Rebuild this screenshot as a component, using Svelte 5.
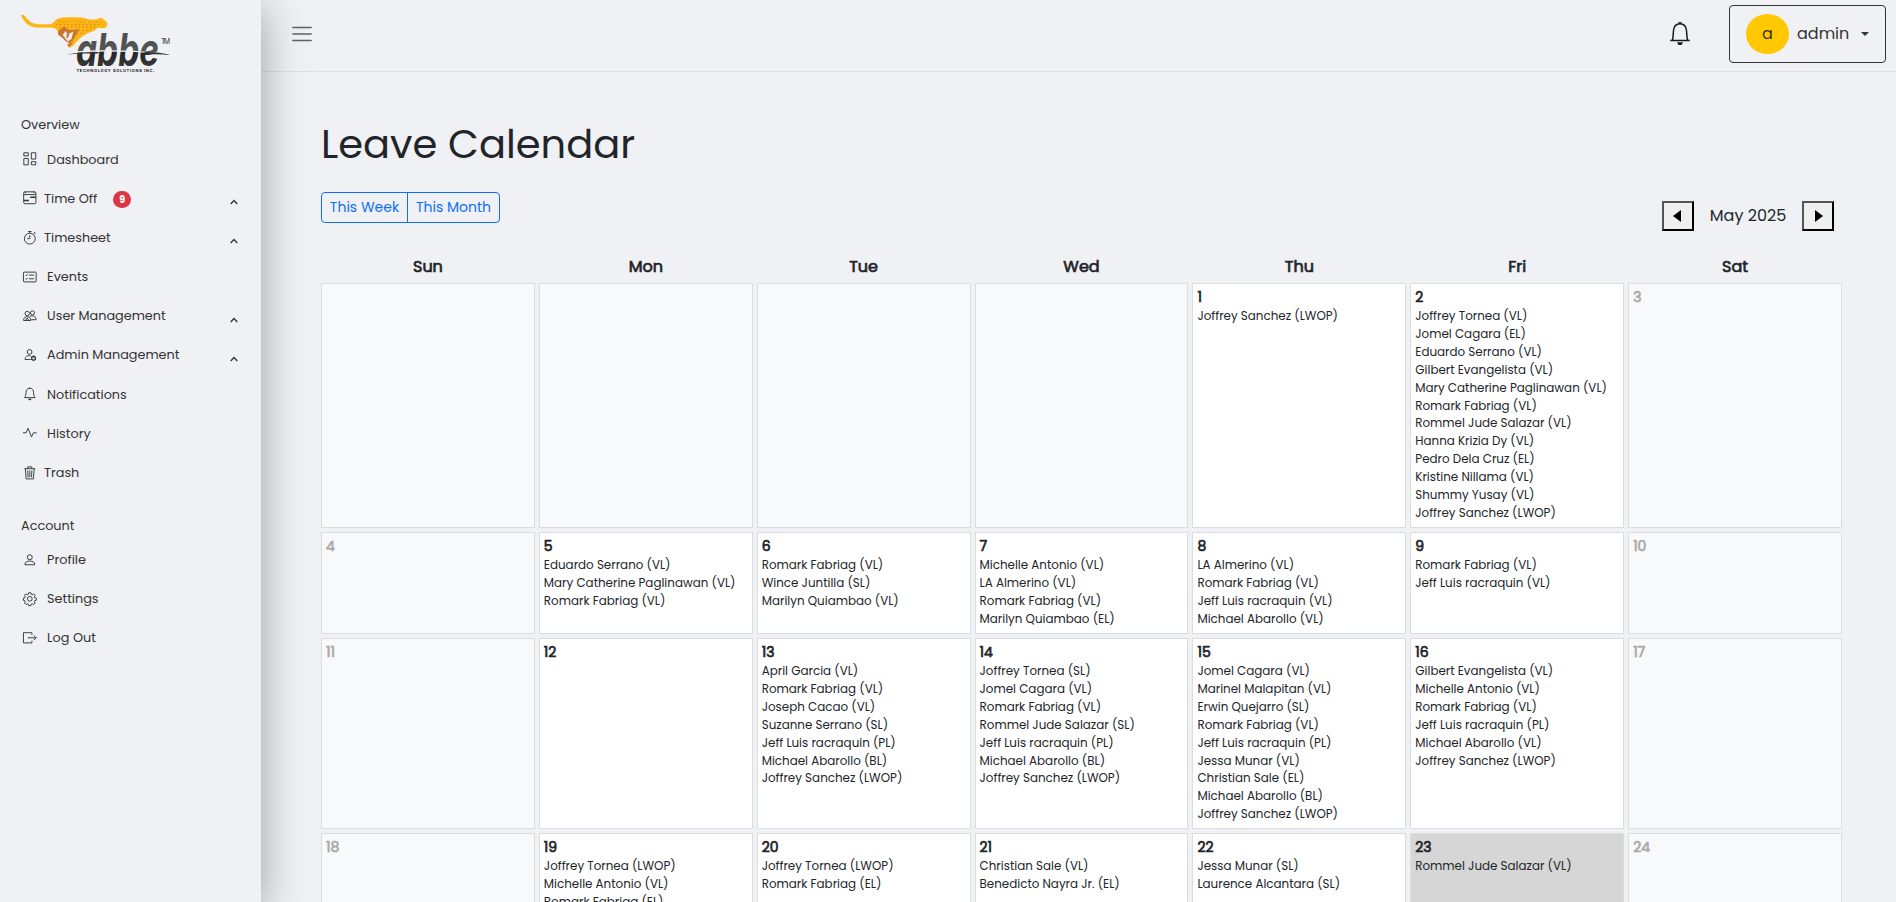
<script>
  const overview = [
    { label: 'Dashboard', icon: 'grid' },
    { label: 'Time Off', icon: 'window', badge: 9, more: true, tight: true },
    { label: 'Timesheet', icon: 'stopwatch', more: true, tight: true },
    { label: 'Events', icon: 'card' },
    { label: 'User Management', icon: 'people', more: true },
    { label: 'Admin Management', icon: 'persongear', more: true },
    { label: 'Notifications', icon: 'bell' },
    { label: 'History', icon: 'activity' },
    { label: 'Trash', icon: 'trash', tight: true }
  ];
  const account = [
    { label: 'Profile', icon: 'person' },
    { label: 'Settings', icon: 'gear' },
    { label: 'Log Out', icon: 'logout' }
  ];
  const weekdays = ['Sun', 'Mon', 'Tue', 'Wed', 'Thu', 'Fri', 'Sat'];
  const leaves = {
    1: ['Joffrey Sanchez (LWOP)'],
    2: ['Joffrey Tornea (VL)', 'Jomel Cagara (EL)', 'Eduardo Serrano (VL)', 'Gilbert Evangelista (VL)', 'Mary Catherine Paglinawan (VL)', 'Romark Fabriag (VL)', 'Rommel Jude Salazar (VL)', 'Hanna Krizia Dy (VL)', 'Pedro Dela Cruz (EL)', 'Kristine Nillama (VL)', 'Shummy Yusay (VL)', 'Joffrey Sanchez (LWOP)'],
    5: ['Eduardo Serrano (VL)', 'Mary Catherine Paglinawan (VL)', 'Romark Fabriag (VL)'],
    6: ['Romark Fabriag (VL)', 'Wince Juntilla (SL)', 'Marilyn Quiambao (VL)'],
    7: ['Michelle Antonio (VL)', 'LA Almerino (VL)', 'Romark Fabriag (VL)', 'Marilyn Quiambao (EL)'],
    8: ['LA Almerino (VL)', 'Romark Fabriag (VL)', 'Jeff Luis racraquin (VL)', 'Michael Abarollo (VL)'],
    9: ['Romark Fabriag (VL)', 'Jeff Luis racraquin (VL)'],
    13: ['April Garcia (VL)', 'Romark Fabriag (VL)', 'Joseph Cacao (VL)', 'Suzanne Serrano (SL)', 'Jeff Luis racraquin (PL)', 'Michael Abarollo (BL)', 'Joffrey Sanchez (LWOP)'],
    14: ['Joffrey Tornea (SL)', 'Jomel Cagara (VL)', 'Romark Fabriag (VL)', 'Rommel Jude Salazar (SL)', 'Jeff Luis racraquin (PL)', 'Michael Abarollo (BL)', 'Joffrey Sanchez (LWOP)'],
    15: ['Jomel Cagara (VL)', 'Marinel Malapitan (VL)', 'Erwin Quejarro (SL)', 'Romark Fabriag (VL)', 'Jeff Luis racraquin (PL)', 'Jessa Munar (VL)', 'Christian Sale (EL)', 'Michael Abarollo (BL)', 'Joffrey Sanchez (LWOP)'],
    16: ['Gilbert Evangelista (VL)', 'Michelle Antonio (VL)', 'Romark Fabriag (VL)', 'Jeff Luis racraquin (PL)', 'Michael Abarollo (VL)', 'Joffrey Sanchez (LWOP)'],
    19: ['Joffrey Tornea (LWOP)', 'Michelle Antonio (VL)', 'Romark Fabriag (EL)'],
    20: ['Joffrey Tornea (LWOP)', 'Romark Fabriag (EL)'],
    21: ['Christian Sale (VL)', 'Benedicto Nayra Jr. (EL)'],
    22: ['Jessa Munar (SL)', 'Laurence Alcantara (SL)'],
    23: ['Rommel Jude Salazar (VL)']
  };
  const today = 23;
  const cells = Array.from({ length: 28 }, (_, i) => {
    const day = i - 3;
    return { day: day > 0 ? day : null, off: day < 1 || i % 7 === 0 || i % 7 === 6, today: day === today, names: leaves[day] ?? [] };
  });
</script>

{#snippet icon(name)}
  <svg class="icon" viewBox="0 0 16 16" fill="none" stroke="currentColor" stroke-width="1.1" aria-hidden="true">
    {#if name === 'grid'}
      <path d="M1 .9h5.2v3.7H1zM9.8.9H15v7.4H9.8zM1 7.7h5.2v7.4H1zM9.8 11.4H15v3.7H9.8z" />
    {:else if name === 'window'}
      <rect x=".8" y="1" width="14.4" height="14" rx="1.5" />
      <path d="M1 4.2h14M3 .5v2M13 .5v2" />
      <path d="M8.5 7.3H15M1 11.2h6" stroke-width="1.9" />
    {:else if name === 'stopwatch'}
      <circle cx="8" cy="9" r="6.4" />
      <path d="M8 5v4H5M6 .6h4M8 .6v2M12.6 3.4l1.3-1.3M13.2 1.4l1.5 1.5" />
    {:else if name === 'card'}
      <rect x=".5" y="2.5" width="15" height="11.5" rx="1" />
      <path d="M7 6h6M7 10.3h6M3 6l.8.8L5.4 5M3 10.3l.8.8 1.6-1.8" />
    {:else if name === 'people'}
      <circle cx="5" cy="5.3" r="2.6" /><circle cx="11.2" cy="4.6" r="2.4" />
      <path d="M.7 13.5c0-3.2 1.8-4.4 4.3-4.4s4.2 1.2 4.2 4.4zM8 8.8c3.8-1.9 7.4 0 7.4 3.8H9.8" />
      <path d="M3.2 13.5l1.8-3 1.7 3" />
    {:else if name === 'persongear'}
      <circle cx="7.8" cy="4.6" r="2.8" />
      <path d="M9 9.3c-4.2-1-6.6.8-6.6 4.2H9" />
      <circle cx="12.4" cy="12.2" r="2.2" stroke-width="1.5" />
      <path d="M12.4 8.8v1.3M12.4 14.2v1.3M9.5 10.5l1.1.7M14.2 13.2l1.1.7M9.5 13.9l1.1-.7M14.2 11.2l1.1-.7" />
    {:else if name === 'bell'}
      <path d="M8 1.6c-2.900 0-4.400 2-4.400 4.600 0 3-.7 5-1.800 6.300h12.400c-1.100-1.300-1.800-3.300-1.800-6.300 0-2.600-1.500-4.600-4.400-4.600zM8 .3v1.300" />
      <path d="M6 13.700h4a2 2 0 0 1-4 0z" fill="currentColor" stroke="none" />
    {:else if name === 'activity'}
      <path d="M0 8h3.6L6 2.6l4 10.3L12.2 8H16" />
    {:else if name === 'trash'}
      <path d="M1.6 3.2h12.8M5.6 3V1h4.8v2M2.8 3.4l.9 11.8h8.6l.9-11.8M5.6 5.3l.3 8M8 5.3v8M10.4 5.3l-.3 8" />
    {:else if name === 'person'}
      <circle cx="8" cy="5" r="2.9" />
      <path d="M2.2 13.8c0-3.2 2.4-4.3 5.8-4.3s5.8 1.1 5.8 4.3z" />
    {:else if name === 'gear'}
      <circle cx="8" cy="8" r="2.8" />
      <path d="M6.7.9h2.6l.5 1.9 1 .4 1.7-1 1.8 1.8-1 1.7.4 1 1.9.5v2.6l-1.9.5-.4 1 1 1.7-1.8 1.8-1.7-1-1 .4-.5 1.9H6.7l-.5-1.9-1-.4-1.7 1L1.7 13l1-1.7-.4-1-1.9-.5V7.2l1.9-.5.4-1-1-1.7 1.8-1.8 1.7 1 1-.4z" />
    {:else if name === 'logout'}
      <path d="M10.5 4.5V2H.5v12h10v-2.500M5.500 8h10M12.700 5.200 15.500 8l-2.800 2.800" />
    {/if}
  </svg>
{/snippet}

{#snippet menu(items)}
  <ul>
    {#each items as item}
      <li class:tight={item.tight}>
        {@render icon(item.icon)}
        <span class="label">{item.label}</span>
        {#if item.badge}<span class="count">{item.badge}</span>{/if}
        {#if item.more}
          <svg class="caret" viewBox="0 0 8 6" aria-hidden="true"><path d="M.7 5 4 1.500 7.300 5" fill="none" stroke="currentColor" stroke-width="1.300" /></svg>
        {/if}
      </li>
    {/each}
  </ul>
{/snippet}

<div class="app">
  <aside>
    <svg class="logo" viewBox="0 0 156 64" role="img" aria-label="abbe Technology Solutions Inc.">
      <defs>
        <linearGradient id="ink" gradientUnits="userSpaceOnUse" x1="0" y1="18" x2="0" y2="52">
          <stop offset="0" stop-color="#4c4d4d" /><stop offset="0.580" stop-color="#555656" /><stop offset="0.600" stop-color="#252626" /><stop offset="1" stop-color="#363737" />
        </linearGradient>
      </defs>
      <path fill="#fdb515" stroke="#fdb515" stroke-width=".5" stroke-linejoin="round" d="M.3 1.500C2 .3 4 2 6 5c3 3.500 6 5 12 5.500 5 .2 9 0 13-.5C33 8 35 5.200 38 4.500 42 3.300 50 3.300 61 3.800c2 .2 4 1.400 6 1.700 4 .6 7 .6 10-.2l1.500-1.300 2.500.4c2 1 3.500 2.600 5 4.400l-.3 3.700-2.700 1.500-6-.5c-2 1-2.500 2.500-5 3.500-5 1.500-9 3.700-13 7-2 2-3.500 4-5.500 5.500-1 2.500-3 3.500-5.500 4l1.500-3.500-2.500-2-4-4.500-5-4.500-2-3.500-3-1.800C27 12.800 22 13.800 15 13.300 8 12.500 4 9 .3 1.500z" />
      <path fill="#c8752d" d="m37 17 6-4.500 4 3 6 .5 5-1-3 6-3.500 6-3 2-4-2-3-3-4.500-3.500zM46.500 30l6-2-3.500 4-2 1z" />
      <path fill="#f0f1f5" d="m41.700 21 3-4 1.300 2.500-.8 3.700 1.700 1.300 1.500-5 4-2-2 7.500-3.500 2.500z" />
      <path fill="none" stroke="#c98225" stroke-width="1.100" stroke-dasharray="1.200 2.600" d="M37 7.500h12M56 8h24M35 10.500h45M39 13h36M54 16.500h16M56 19.500h8" />
      <text class="abbe" x="55" y="52" textLength="83" lengthAdjust="spacingAndGlyphs" fill="url(#ink)">abbe</text>
      <path fill="#f0f1f5" d="M52 37.500c26-2 58-1.600 86 1.200v1.100C108 37 78 37 52 38.900z" />
      <path fill="#333" d="M46 40.500c10-2 21-2.500 32-2.500l-1 1.500c-11-.1-21 0-31 1zM150 41c-9-2.300-18-3.300-27-3l3 2.500c8-.5 16-.300 24 .5z" />
      <text class="tm" x="140" y="29.500" textLength="9">TM</text>
      <text class="tag" x="55.500" y="58" textLength="78">TECHNOLOGY SOLUTIONS INC.</text>
    </svg>
    <nav>
      <h2>Overview</h2>
      {@render menu(overview)}
      <h2 class="second">Account</h2>
      {@render menu(account)}
    </nav>
  </aside>

  <div class="page">
    <header>
      <svg class="burger" viewBox="0 0 20 16" aria-hidden="true"><path d="M1 1.500h18M1 8h18M1 14.500h18" stroke="#5f6265" stroke-width="1.700" stroke-linecap="round" /></svg>
      <div class="tools">
        <svg class="bell" viewBox="0 0 20 24" fill="none" stroke="#17191c" stroke-width="1.500" aria-hidden="true">
          <path d="M.3 19.500h19.400M2.300 19.500C3.500 16 3 13.500 3.500 9.500 4 5 6.500 2.800 10 2.800s6 2.200 6.500 6.700c.5 4 0 6.500 1.200 10" />
          <path d="M8.300 2.500a1.700 1.700 0 0 1 3.400 0zM7 21.300h6L11.500 24h-3z" fill="#17191c" stroke="none" />
        </svg>
        <button class="user"><span class="avatar">a</span><span class="name">admin</span><i></i></button>
      </div>
    </header>
    <main>
      <h1>Leave Calendar</h1>
      <div class="bar">
        <div class="range"><button>This Week</button><button>This Month</button></div>
        <div class="pager">
          <button class="prev" aria-label="Previous"><svg viewBox="0 0 8 12"><path d="M8 0v12L0 6z" /></svg></button>
          <span>May 2025</span>
          <button class="next" aria-label="Next"><svg viewBox="0 0 8 12"><path d="M0 0v12l8-6z" /></svg></button>
        </div>
      </div>
      <div class="days">
        {#each weekdays as d}<div>{d}</div>{/each}
      </div>
      <div class="calendar">
        {#each cells as cell}
          <div class="cell" class:off={cell.off} class:today={cell.today}>
            <div class="date">{cell.day ?? ''}</div>
            {#each cell.names as name}<div class="leave">{name}</div>{/each}
          </div>
        {/each}
      </div>
    </main>
  </div>
</div>

<style>
  :global(body) { margin: 0; overflow: hidden; background: #f0f1f5; }
  .app {
    display: flex; height: 902px; overflow: hidden; background: #f0f1f5; color: #212529;
    font-family: Poppins, Inter, "Open Sans", sans-serif; font-size: 16px;
  }
  button { font: inherit; color: inherit; }
  aside { position: relative; z-index: 1; flex: none; width: 261px; box-shadow: 0 8px 40px rgba(60, 75, 80, .5); background: #f0f1f5; }
  .logo { display: block; width: 156px; height: 64px; margin: 14px 0 0 21px; overflow: visible; }
  .abbe { font: italic 700 45px Inter, sans-serif; }
  .tm { font: 7px Inter, sans-serif; fill: #333; }
  .tag { font: 700 4px Inter, sans-serif; fill: #222; }
  nav { padding-top: 36px; color: #333; }
  h2 { margin: 0; padding-left: 21px; font-size: 12.800px; font-weight: 400; line-height: 22px; }
  h2.second { margin-top: 22px; }
  ul { list-style: none; margin: 0; padding: 4px 0 0; }
  li { display: flex; align-items: center; height: 39.180px; padding: 0 22px 0 22.500px; font-size: 12.800px; }
  .icon { flex: none; width: 13.600px; height: 13.600px; margin: 0 11px 1px 0; overflow: visible; }
  .tight .icon { margin-right: 8px; }
  .count { display: grid; place-items: center; box-sizing: border-box; width: 18px; height: 17px; margin: 2px 0 0 16px; padding-top: 1px; border-radius: 9px; background: #dc3545; color: #fff; font-size: 9.600px; font-weight: 700; }
  .caret { width: 8px; height: 6px; margin: 7px 1px 0 auto; }
  .page { flex: 1; min-width: 0; }
  header { display: flex; align-items: center; justify-content: space-between; box-sizing: border-box; height: 72px; padding: 0 10px 4px 31px; border-bottom: 1px solid #dee0e3; }
  .burger { width: 20px; height: 16px; }
  .tools { display: flex; align-items: center; gap: 39px; }
  .bell { width: 20px; height: 24px; margin-bottom: 2px; }
  .user { display: flex; align-items: center; box-sizing: border-box; width: 157px; height: 58px; padding: 0 16px; border: 1px solid #333; border-radius: 4px; background: none; color: #333; }
  .avatar { display: grid; place-items: center; width: 43px; height: 40px; margin-right: 8px; border-radius: 50%; background: #ffc800; }
  .user i { margin-left: auto; border: 4px solid transparent; border-top-color: #333; border-bottom: 0; }
  main { padding: 42px 54px 0 60px; }
  h1 { margin: 0; font-size: 40px; line-height: 60px; font-weight: 400; }
  .bar { display: flex; justify-content: space-between; align-items: flex-start; margin-top: 18px; }
  .range { display: flex; border: 1px solid #0d6efd; border-radius: 4px; }
  .range button { box-sizing: border-box; width: 85px; height: 29px; padding: 0; border: 0; background: none; color: #0d6efd; font-size: 14px; }
  .range button + button { width: 92px; border-left: 1px solid #0d6efd; }
  .pager { display: flex; align-items: center; margin: 9px 8px 0 0; }
  .pager span { width: 108px; margin-top: -2px; text-align: center; }
  .pager button { display: grid; place-items: center; box-sizing: border-box; width: 32px; height: 30px; padding: 0 0 1px; border: 2px outset #000; background: #efefef; }
  .pager .prev { padding-right: 2px; }
  .pager .next { padding-left: 2px; }
  .pager svg { width: 8px; height: 12px; }
  .days, .calendar { display: grid; grid-template-columns: repeat(7, 1fr); gap: 4px; }
  .days, .date { font-weight: 400; -webkit-text-stroke: .7px currentColor; }
  .days { margin-top: 24px; text-align: center; line-height: 24px; }
  .calendar { margin-top: 4px; grid-template-rows: 245px 102px 191px 300px; }
  .cell { box-sizing: border-box; min-width: 0; padding: 4px; border: 1px solid #dcdddf; background: #fff; }
  .off { background: #f8f9fb; color: #aaa; }
  .today { background: #d6d6d6; }
  .date { height: 20.400px; line-height: 19.400px; font-size: 14px; }
  .leave { height: 17.850px; line-height: 17.850px; font-size: 11.900px; white-space: nowrap; }
</style>
